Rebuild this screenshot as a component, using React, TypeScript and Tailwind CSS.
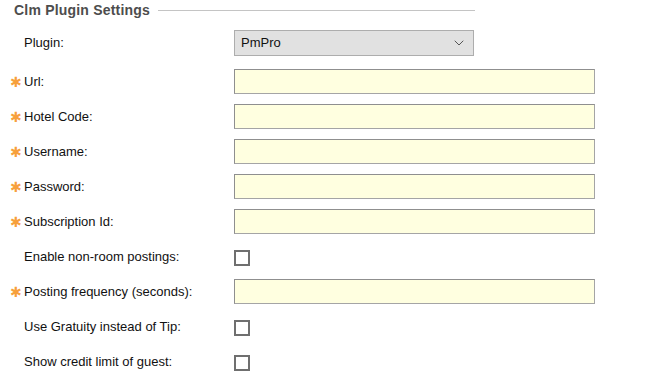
import { ChevronDown } from "lucide-react";

type Row = { label: string; required?: boolean; kind: "text" | "check" };

const rows: Row[] = [
  { label: "Url:", required: true, kind: "text" },
  { label: "Hotel Code:", required: true, kind: "text" },
  { label: "Username:", required: true, kind: "text" },
  { label: "Password:", required: true, kind: "text" },
  { label: "Subscription Id:", required: true, kind: "text" },
  { label: "Enable non-room postings:", kind: "check" },
  { label: "Posting frequency (seconds):", required: true, kind: "text" },
  { label: "Use Gratuity instead of Tip:", kind: "check" },
  { label: "Show credit limit of guest:", kind: "check" },
];

export default function App() {
  return (
    <div
      className="h-[379px] w-[650px] overflow-hidden bg-white text-[13px] text-[#111]"
      style={{ fontFamily: '"Liberation Sans", Arial, sans-serif' }}
    >
      {/* group header */}
      <div className="flex h-[21px] w-[475px] items-center pl-[14px]">
        <span className="text-[14px] font-bold tracking-[0.2px] text-[#4d4d4d]">Clm Plugin Settings</span>
        <div className="ml-[8px] h-px flex-1 bg-[#c4c4c4]" />
      </div>

      <div className="flex h-[43px] items-center">
        <div className="w-[234px] pl-[24px]">Plugin:</div>
        <div className="flex h-[26px] w-[240px] items-center justify-between border border-[#adadad] bg-[#e1e1e1] pl-[6px] pr-[6px]">
          <span>PmPro</span>
          <ChevronDown className="h-4 w-4 text-[#555]" strokeWidth={1.5} />
        </div>
      </div>

      {rows.map((row) => (
        <div key={row.label} className="flex h-[35px] items-center">
          <div className="flex w-[234px] items-center pl-[10px]">
            <span className="w-[14px] text-[14px] leading-none text-[#f7a03c]">
              {row.required ? "✱" : ""}
            </span>
            <span>{row.label}</span>
          </div>
          {row.kind === "text" ? (
            <div className="h-[25px] w-[361px] border border-[#a5a5a5] border-t-[#8f8f8f] border-l-[#8f8f8f] bg-[#ffffe0]" />
          ) : (
            <div className="mt-[3px] h-[16px] w-[16px] border-2 border-[#6f6f6f] bg-white" />
          )}
        </div>
      ))}
    </div>
  );
}
